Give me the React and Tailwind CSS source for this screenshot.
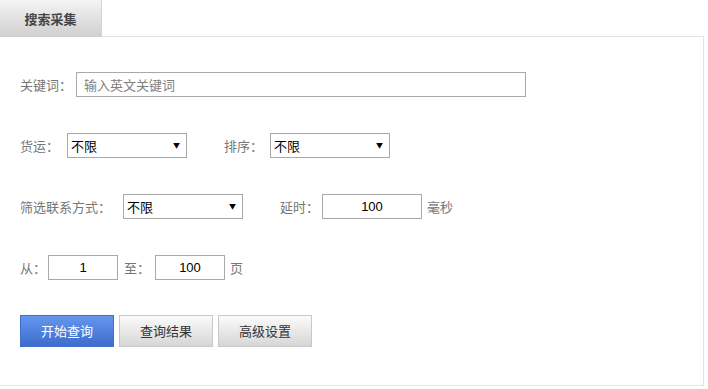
import React from "react";

const font = { fontFamily: '"Microsoft YaHei", "Noto Sans CJK SC", "Liberation Sans", sans-serif' };

// fake select box: text on the left, small triangle on the right
function Select({ width, value = "不限" }) {
  return (
    <div
      className={`flex h-[25px] items-center justify-between border border-[#a9a9a9] bg-white pl-[3px] pr-[6px] text-[13px] text-black ${width}`}
    >
      <span>{value}</span>
      <span className="text-[7px] leading-none">▼</span>
    </div>
  );
}

function Field({ width, value, placeholder }) {
  return (
    <div
      className={`flex h-[25px] items-center border border-[#a9a9a9] bg-white text-[13px] ${width} ${
        placeholder ? "justify-start pl-[7px] text-[#808080]" : "justify-center text-black"
      }`}
      style={{ fontFamily: placeholder ? undefined : '"Liberation Sans", Arial, sans-serif' }}
    >
      {placeholder || value}
    </div>
  );
}

function Label({ children, className = "" }) {
  return <span className={`text-[13px] text-[#777] ${className}`}>{children}</span>;
}

function Button({ children, primary }) {
  return (
    <button
      type="button"
      className={`h-[32px] w-[94px] border text-[13px] ${
        primary
          ? "border-[#3f6fcb] bg-gradient-to-b from-[#6597ef] to-[#3e6ccb] text-white"
          : "border-[#c8c8c8] bg-gradient-to-b from-[#fbfbfb] to-[#d6d6d6] text-[#333]"
      }`}
    >
      {children}
    </button>
  );
}

export default function App() {
  return (
    <div className="h-[389px] w-[708px] bg-white" style={font}>
      {/* Tab header */}
      <div className="flex h-[37px] w-[704px]">
        <div className="flex h-[37px] w-[102px] items-center justify-center border-r border-[#d4d4d4] bg-gradient-to-b from-[#f4f4f4] to-[#cfcfcf] text-[13px] font-bold text-[#444]">
          搜索采集
        </div>
        <div className="flex-1 border-b border-[#e4e4e4]" />
      </div>

      {/* Panel */}
      <div className="h-[349px] w-[704px] border-r border-b border-[#e4e4e4] pl-[20px] pt-[35px]">
        <div className="flex h-[25px] items-center">
          <Label className="w-[56px]">关键词：</Label>
          <Field width="w-[450px]" placeholder="输入英文关键词" />
        </div>

        <div className="mt-[36px] flex h-[25px] items-center">
          <Label className="w-[47px]">货运：</Label>
          <Select width="w-[120px]" />
          <Label className="ml-[37px] w-[46px]">排序：</Label>
          <Select width="w-[120px]" />
        </div>

        <div className="mt-[36px] flex h-[25px] items-center">
          <Label className="w-[103px]">筛选联系方式：</Label>
          <Select width="w-[120px]" />
          <Label className="ml-[37px] w-[42px]">延时：</Label>
          <Field width="w-[100px]" value="100" />
          <Label className="ml-[5px]">毫秒</Label>
        </div>

        <div className="mt-[36px] flex h-[25px] items-center">
          <Label className="w-[28px]">从：</Label>
          <Field width="w-[70px]" value="1" />
          <Label className="ml-[6px] w-[31px]">至：</Label>
          <Field width="w-[70px]" value="100" />
          <Label className="ml-[5px]">页</Label>
        </div>

        <div className="mt-[35px] flex gap-[5px]">
          <Button primary>开始查询</Button>
          <Button>查询结果</Button>
          <Button>高级设置</Button>
        </div>
      </div>
    </div>
  );
}
